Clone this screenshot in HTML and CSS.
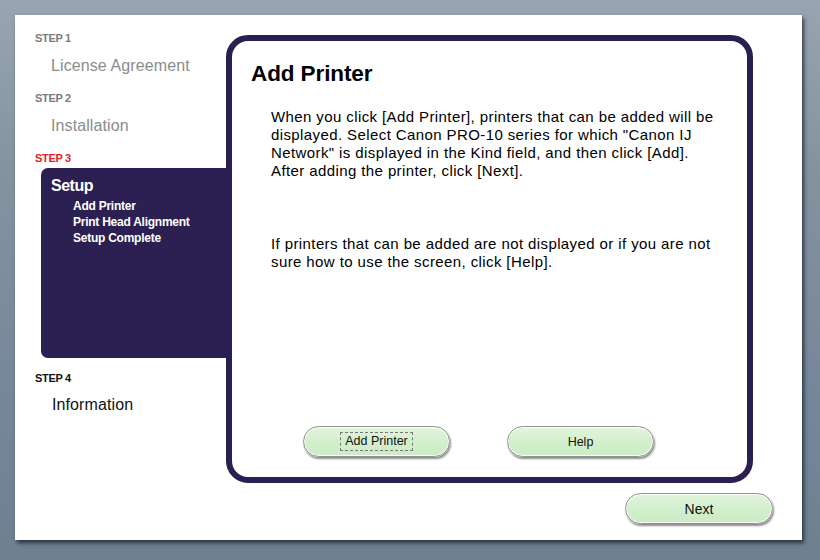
FILE: index.html
```html
<!DOCTYPE html>
<html>
<head>
<meta charset="utf-8">
<link rel="stylesheet" href="styles.css">
</head>
<body>
<div class="window">
  <div class="main">
    <div class="sidebar">
      <div class="step step-done">STEP 1</div>
      <div class="label label-done">License Agreement</div>
      <div class="step step-done step-gap">STEP 2</div>
      <div class="label label-done">Installation</div>
      <div class="step step-current step-gap">STEP 3</div>
      <div class="current-block">
        <div class="current-title">Setup</div>
        <ul class="sub-list">
          <li>Add Printer</li>
          <li>Print Head Alignment</li>
          <li>Setup Complete</li>
        </ul>
      </div>
      <div class="step step-next">STEP 4</div>
      <div class="label label-next">Information</div>
    </div>
    <div class="panel">
      <h1 class="panel-title">Add Printer</h1>
      <p class="panel-text">When you click [Add Printer], printers that can be added will be displayed. Select Canon PRO-10 series for which "Canon IJ Network" is displayed in the Kind field, and then click [Add]. After adding the printer, click [Next].</p>
      <p class="panel-text panel-text-2">If printers that can be added are not displayed or if you are not sure how to use the screen, click [Help].</p>
      <div class="panel-buttons">
        <button class="pill"><span class="focus">Add Printer</span></button>
        <button class="pill">Help</button>
      </div>
    </div>
  </div>
  <div class="footer">
    <button class="pill pill-next">Next</button>
  </div>
</div>
</body>
</html>
```

FILE: styles.css
```css
* { box-sizing: border-box; }
html, body { margin: 0; padding: 0; }
body {
  width: 820px;
  height: 560px;
  overflow: hidden;
  background: linear-gradient(180deg, #98a5b1 0%, #8593a0 30%, #76879a 70%, #6e8090 100%);
  font-family: "Liberation Sans", Arial, sans-serif;
  padding: 15px 18px 0 15px;
}
.window {
  width: 787px;
  height: 525px;
  background: #fff;
  box-shadow: 2px 3px 4px rgba(20, 25, 35, 0.75);
  display: flex;
  flex-direction: column;
}
.main {
  display: flex;
  align-items: flex-start;
}
.sidebar {
  width: 211px;
  padding: 16px 0 0 20px;
  display: flex;
  flex-direction: column;
  align-items: flex-start;
}
.step {
  font-size: 11px;
  font-weight: bold;
  line-height: 14px;
  letter-spacing: -0.3px;
}
.step-gap { margin-top: 15px; }
.step-done { color: #7b7b7b; }
.step-current { color: #e62020; }
.step-next { color: #111; margin-top: 13px; }
.label {
  font-size: 16px;
  line-height: 20px;
  margin-top: 11px;
  padding-left: 16px;
  letter-spacing: 0.1px;
}
.label-done { color: #8c8c8c; }
.label-next { color: #111; padding-left: 17px; margin-top: 10px; }
.current-block {
  margin-top: 3px;
  margin-left: 6px;
  width: 187px;
  height: 190px;
  background: #2c1f52;
  border-radius: 7px 0 0 7px;
  padding: 8px 0 0 10px;
  color: #fff;
}
.current-title {
  font-size: 16px;
  font-weight: bold;
  line-height: 20px;
  letter-spacing: -0.5px;
}
.sub-list {
  list-style: none;
  margin: 2px 0 0 0;
  padding: 0 0 0 22px;
}
.sub-list li {
  font-size: 12px;
  font-weight: bold;
  line-height: 16px;
  letter-spacing: -0.25px;
}
.panel {
  margin-top: 20px;
  width: 527px;
  height: 448px;
  border: 6px solid #2a1f50;
  border-radius: 22px;
  padding: 19px 20px 20px 19px;
  display: flex;
  flex-direction: column;
  position: relative;
  z-index: 1;
  background: #fff;
}
.panel-title {
  margin: 0;
  font-size: 22.5px;
  font-weight: bold;
  line-height: 27px;
  color: #000;
  letter-spacing: -0.1px;
}
.panel-text {
  margin: 21px 0 0 20px;
  font-size: 15px;
  line-height: 18px;
  letter-spacing: 0.4px;
  color: #000;
  width: 450px;
}
.panel-text-2 { margin-top: 55px; }
.panel-buttons {
  margin-top: auto;
  display: flex;
  gap: 57px;
  padding-left: 52px;
  margin-bottom: 0;
}
.pill {
  width: 147px;
  height: 31px;
  border: 1px solid #8f938f;
  border-radius: 16px;
  background: linear-gradient(180deg, #e2f5de 0%, #d3efcd 50%, #cdebc6 100%);
  box-shadow: inset 0 0 0 1px #fbfffa, 1px 2px 2px rgba(0, 0, 0, 0.45);
  font-family: "Liberation Sans", Arial, sans-serif;
  font-size: 12.5px;
  color: #111;
  padding: 0;
  display: flex;
  align-items: center;
  justify-content: center;
}
.focus {
  border: 1px dashed #777;
  padding: 1px 4px;
  line-height: 15px;
}
.footer {
  display: flex;
  justify-content: flex-end;
  padding: 10px 29px 0 0;
}
.pill-next {
  width: 148px;
  height: 31px;
  font-size: 14px;
}
```
